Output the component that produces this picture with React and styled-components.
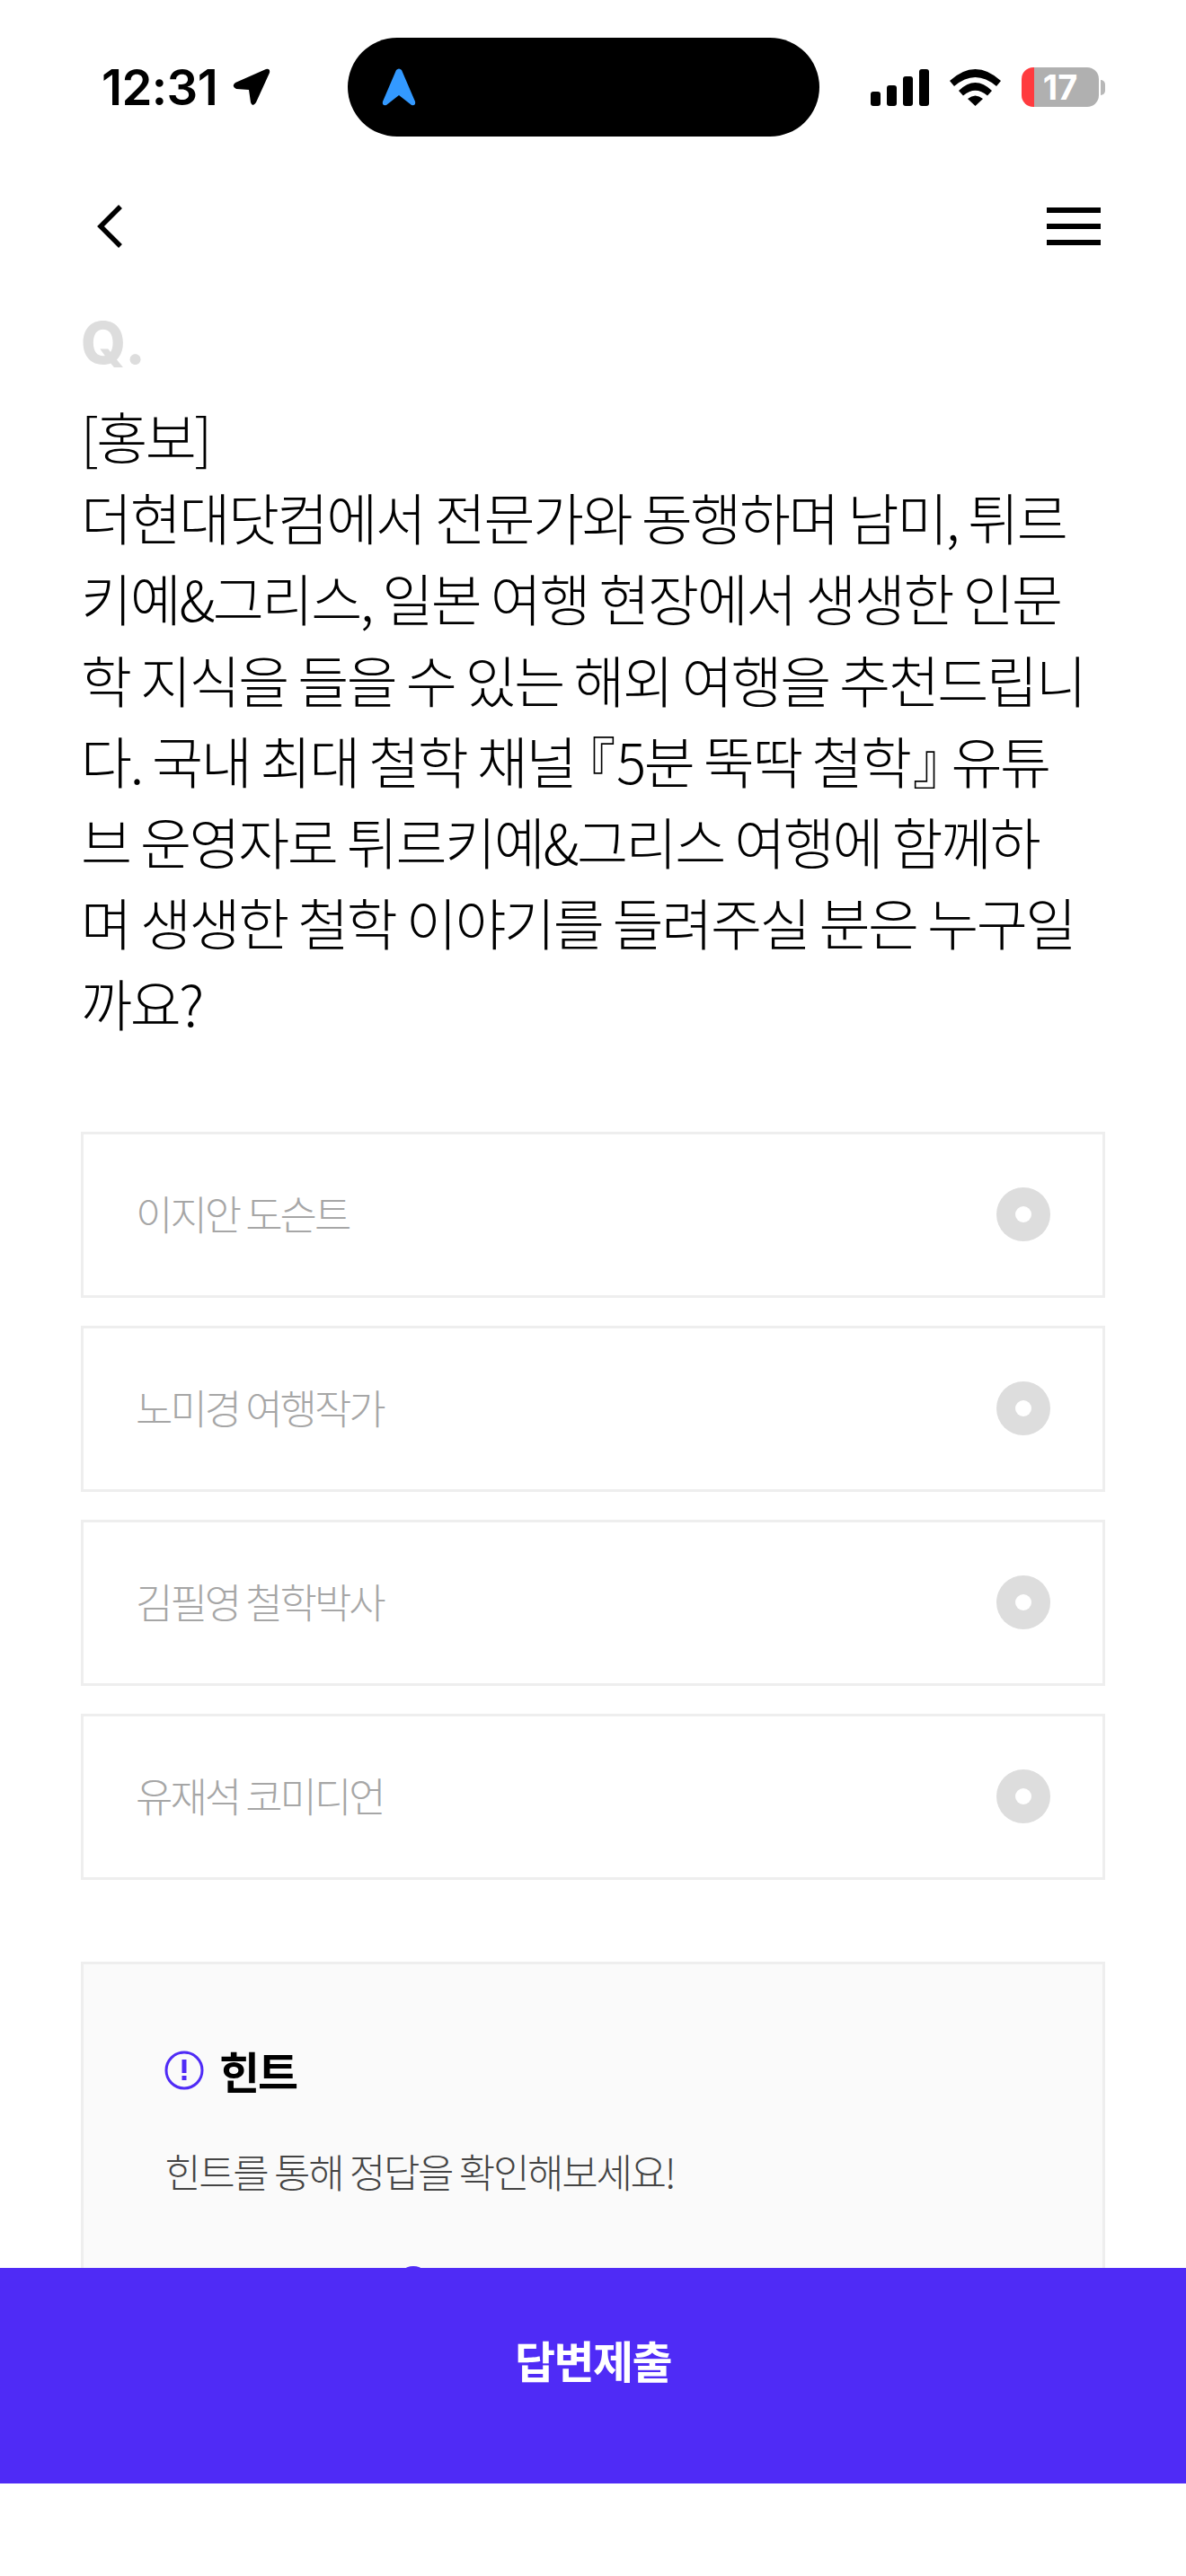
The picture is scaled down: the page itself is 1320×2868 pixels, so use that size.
import React from "react";
import styled, { createGlobalStyle } from "styled-components";

const GlobalStyle = createGlobalStyle`
  * {
    box-sizing: border-box;
  }
  html,
  body {
    margin: 0;
    padding: 0;
    background: #fff;
  }
  body {
    font-family: "Noto Sans CJK KR", "Noto Sans", sans-serif;
  }
`;

const Screen = styled.div`
  position: relative;
  width: 1320px;
  height: 2868px;
  overflow: hidden;
  background: #fff;
`;

const StatusBar = styled.div`
  display: flex;
  align-items: center;
  height: 194px;
  padding: 0 86px 0 113px;
`;

const Clock = styled.div`
  display: flex;
  align-items: center;
  gap: 17px;
  width: 274px;
  font-family: "Inter", sans-serif;
  font-size: 54.5px;
  font-weight: 600;
  letter-spacing: -0.6px;
  color: #000;
`;

const Island = styled.div`
  display: flex;
  align-items: center;
  width: 525px;
  height: 110px;
  padding-left: 38px;
  border-radius: 55px;
  background: #000;
`;

const StatusIcons = styled.div`
  display: flex;
  align-items: center;
  gap: 23px;
  margin-left: 57px;
`;

const BatteryWrap = styled.div`
  display: flex;
  align-items: center;
  gap: 2px;
`;

const Battery = styled.div`
  width: 86px;
  height: 44px;
  border-radius: 13px;
  display: flex;
  align-items: center;
  justify-content: center;
  background: linear-gradient(to right, #ff3b3f 0 14px, #b0b0b0 14px);
  font-family: "Inter", sans-serif;
  font-size: 38px;
  font-weight: 700;
  color: #fff;
`;

const BatteryCap = styled.div`
  width: 5px;
  height: 17px;
  border-radius: 0 5px 5px 0;
  background: #b8b8b8;
`;

const NavBar = styled.div`
  display: flex;
  align-items: center;
  justify-content: space-between;
  height: 70px;
  margin-top: 23px;
  padding: 0 95px 0 107px;
`;

const IconButton = styled.div`
  display: flex;
  align-items: center;
`;

const Main = styled.div`
  padding: 64px 90px 0;
`;

const QuestionMark = styled.div`
  height: 62px;
  font-family: "Inter", sans-serif;
  font-size: 64px;
  font-weight: 800;
  line-height: 62px;
  letter-spacing: 2px;
  color: #ddd;
`;

const QuestionText = styled.div`
  margin-top: 27px;
  font-size: 62px;
  font-weight: 300;
  line-height: 90.2px;
  letter-spacing: -2.4px;
  color: #000;
`;

const Line = styled.div`
  white-space: nowrap;
`;

const Bracket = styled.span`
  font-feature-settings: "halt";
  padding: 0 3px;
`;

const OptionList = styled.div`
  display: flex;
  flex-direction: column;
  gap: 31px;
  margin-top: 98px;
`;

const Option = styled.div`
  display: flex;
  align-items: center;
  justify-content: space-between;
  height: 185px;
  padding: 0 58px 0 58px;
  border: 3px solid #eee;
  background: #fff;
`;

const OptionLabel = styled.span`
  margin-top: -3px;
  font-size: 45px;
  font-weight: 300;
  letter-spacing: -3px;
  color: #a6a6a6;
`;

const Radio = styled.span`
  display: flex;
  align-items: center;
  justify-content: center;
  width: 60px;
  height: 60px;
  border-radius: 50%;
  background: #ddd;
  &::after {
    content: "";
    width: 18px;
    height: 18px;
    border-radius: 50%;
    background: #fff;
  }
`;

const HintBox = styled.div`
  margin-top: 91px;
  height: 700px;
  padding: 88px 90px 0 90px;
  border: 3px solid #eee;
  background: #fafafa;
`;

const HintTitle = styled.div`
  display: flex;
  align-items: center;
  gap: 17px;
  font-size: 49px;
  font-weight: 700;
  letter-spacing: -2.2px;
  line-height: 60px;
  color: #000;
`;

const HintText = styled.div`
  margin-top: 52px;
  font-size: 44px;
  font-weight: 300;
  letter-spacing: -2.3px;
  line-height: 60px;
  color: #444;
`;

const HintPeek = styled.svg`
  display: block;
  margin-top: 76px;
`;

const Footer = styled.div`
  position: absolute;
  left: 0;
  right: 0;
  bottom: 0;
  height: 343px;
  background: #fff;
`;

const SubmitButton = styled.div`
  height: 240px;
  padding-top: 72px;
  background: #4f2bf6;
  text-align: center;
  font-size: 49px;
  font-weight: 700;
  line-height: 60px;
  letter-spacing: -1.6px;
  color: #fff;
`;

const questionLines = [
  "[홍보]",
  "더현대닷컴에서 전문가와 동행하며 남미, 튀르",
  "키예&그리스, 일본 여행 현장에서 생생한 인문",
  "학 지식을 들을 수 있는 해외 여행을 추천드립니",
  <>
    다. 국내 최대 철학 채널 <Bracket>『</Bracket>5분 뚝딱 철학<Bracket>』</Bracket> 유튜
  </>,
  "브 운영자로 튀르키예&그리스 여행에 함께하",
  "며 생생한 철학 이야기를 들려주실 분은 누구일",
  "까요?",
];

const options = ["이지안 도슨트", "노미경 여행작가", "김필영 철학박사", "유재석 코미디언"];

const App = () => {
  return (
    <Screen>
      <GlobalStyle />
      <StatusBar>
        <Clock>
          12:31
          <svg width="42" height="42" viewBox="0 0 42 42">
            <path d="M37 1 Q42 0 41 5 L26 38 Q22 44 20 38 L18 24 L4 23 Q-2 20 3 16 Z" fill="#000" />
          </svg>
        </Clock>
        <Island>
          <svg width="38" height="42" viewBox="0 0 38 42">
            <path d="M16 2 Q19 -1 22 2 L37 37 Q38 42 33 41 L19 30 L5 41 Q0 42 1 37 Z" fill="#3399ff" />
          </svg>
        </Island>
        <StatusIcons>
          <svg width="65" height="41" viewBox="0 0 65 41">
            <rect x="0" y="25" width="11" height="16" rx="3" fill="#000" />
            <rect x="18" y="18" width="11" height="23" rx="3" fill="#000" />
            <rect x="36" y="8" width="11" height="33" rx="3" fill="#000" />
            <rect x="54" y="0" width="11" height="41" rx="3" fill="#000" />
          </svg>
          <svg width="57" height="41" viewBox="0 0 57 41">
            <path d="M0 13 Q28.5 -13 57 13 L52 19 Q28.5 -1 5 19 Z" fill="#000" />
            <path d="M10 24 Q28.5 6 47 24 L42 29.5 Q28.5 18 15 29.5 Z" fill="#000" />
            <path d="M20 33 Q28.5 26 37 33 L28.5 41 Z" fill="#000" />
          </svg>
          <BatteryWrap>
            <Battery>17</Battery>
            <BatteryCap />
          </BatteryWrap>
        </StatusIcons>
      </StatusBar>
      <NavBar>
        <IconButton>
          <svg width="34" height="50" viewBox="0 0 34 50">
            <path d="M27 3 L5 25 L27 47" fill="none" stroke="#000" strokeWidth="5.5" />
          </svg>
        </IconButton>
        <IconButton>
          <svg width="60" height="42" viewBox="0 0 60 42">
            <rect y="0" width="60" height="6" fill="#000" />
            <rect y="18" width="60" height="6" fill="#000" />
            <rect y="36" width="60" height="6" fill="#000" />
          </svg>
        </IconButton>
      </NavBar>
      <Main>
        <QuestionMark>Q.</QuestionMark>
        <QuestionText>
          {questionLines.map((line, i) => (
            <Line key={i}>{line}</Line>
          ))}
        </QuestionText>
        <OptionList>
          {options.map((option) => (
            <Option key={option}>
              <OptionLabel>{option}</OptionLabel>
              <Radio />
            </Option>
          ))}
        </OptionList>
        <HintBox>
          <HintTitle>
            <svg width="44" height="44" viewBox="0 0 44 44">
              <circle cx="22" cy="22" r="20" fill="none" stroke="#4f2bf6" strokeWidth="3" />
              <rect x="19.5" y="10" width="5" height="15" fill="#4f2bf6" />
              <rect x="19.5" y="28" width="5" height="5" fill="#4f2bf6" />
            </svg>
            힌트
          </HintTitle>
          <HintText>힌트를 통해 정답을 확인해보세요!</HintText>
          <HintPeek width="300" height="36" viewBox="0 0 300 36">
            <rect x="8" y="2" width="4" height="28" fill="#4f2bf6" />
            <rect x="146" y="2" width="5" height="28" fill="#4f2bf6" />
            <circle cx="277" cy="18" r="18" fill="#4f2bf6" />
          </HintPeek>
        </HintBox>
      </Main>
      <Footer>
        <SubmitButton>답변제출</SubmitButton>
      </Footer>
    </Screen>
  );
};

export default App;
